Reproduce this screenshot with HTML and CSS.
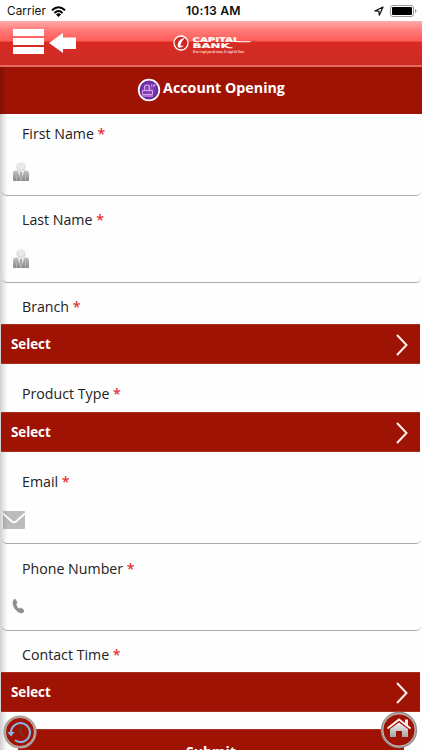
FILE: index.html
```html
<!DOCTYPE html>
<html lang="en">
<head>
<meta charset="utf-8">
<title>Account Opening</title>
<link rel="stylesheet" href="styles.css">
</head>
<body>
<svg class="defs" width="0" height="0">
  <defs>
    <linearGradient id="silver" x1="0" y1="0" x2="0" y2="1"><stop offset="0" stop-color="#f2f2f2"/><stop offset="1" stop-color="#a5a5a5"/></linearGradient>
    <linearGradient id="suit" x1="0" y1="0" x2="0" y2="1"><stop offset="0" stop-color="#c4c4c4"/><stop offset="1" stop-color="#888"/></linearGradient>
    <symbol id="person" viewBox="0 0 18 20">
      <path d="M1 10.5Q1.500 8.500 4 8.500H14Q16.500 8.500 17 10.500V18Q17 19 16 19H2Q1 19 1 18Z" fill="url(#suit)"/>
      <path d="M5.500 8H12.500L9 19Z" fill="#eee"/>
      <path d="M8 10H10L10.500 15L9 18L7.500 15Z" fill="#aaa"/>
      <path d="M4.500 14V19M13.500 14V19" stroke="#ccc" stroke-width=".5"/>
      <circle cx="9" cy="5" r="4.600" fill="#ddd"/>
      <circle cx="9" cy="4" r="3.200" fill="#e9e9e9"/>
    </symbol>
    <symbol id="chevron" viewBox="0 0 14 24"><path d="M2 2L11.500 12L2 22" fill="none" stroke="#fff0e9" stroke-width="2"/></symbol>
  </defs>
</svg>
<div class="screen">
  <div class="status">
    <span class="carrier">Carrier</span>
    <svg class="wifi" width="15" height="11" viewBox="0 0 15 11"><g fill="none" stroke="#000" stroke-width="2"><path d="M1 4.300Q7.500-1.700 14 4.300"/><path d="M3.500 6.900Q7.500 3.200 11.500 6.900"/></g><path d="M5 8.400Q7.500 6.300 10 8.400L7.500 11Z"/></svg>
    <span class="time">10:13 AM</span>
    <svg class="loc" width="10" height="10" viewBox="0 0 10 10"><path d="M.8 5L9 1L5.300 9.200L4.900 5.100Z" fill="none" stroke="#111" stroke-width="1.200" stroke-linejoin="round"/></svg>
    <svg class="battery" width="27" height="12" viewBox="0 0 27 12"><rect x=".5" y=".5" width="23" height="11" rx="2.500" fill="#fff" stroke="#999"/><rect x="2" y="2" width="20" height="8" rx="1"/><path d="M25 4Q26.500 4.500 26.500 6T25 8Z" fill="#999"/></svg>
  </div>
  <header class="bar">
    <svg class="menu" width="31" height="25" viewBox="0 0 31 25"><path d="M0 0H31V7H0ZM0 9H31V16H0ZM0 18H31V25H0Z" fill="#fff"/></svg>
    <svg class="back" width="27" height="20" viewBox="0 0 27 20"><path d="M0 10L14 0V4.500H27V16H14V20Z" fill="#fff"/></svg>
    <svg class="logo" width="80" height="20" viewBox="0 0 80 20">
      <circle cx="8" cy="9" r="7" fill="#cf2525" stroke="#fff" stroke-width="1.300"/>
      <path d="M11.800 4.300Q6.800 4.300 5 9Q3.800 13.500 6.500 13.700Q9.500 13.500 11 11.500L7.500 12Q8 7.500 11.800 4.300Z" fill="#fff"/>
      <text class="brand" x="19.500" y="8.200" textLength="47" lengthAdjust="spacingAndGlyphs">CAPITAL</text>
      <path d="M65 7.700H77.500M55 13.700H59.500" stroke="#fff" stroke-width="1.100"/>
      <text class="brand" x="19.500" y="14.200" textLength="37" lengthAdjust="spacingAndGlyphs">BANK</text>
      <text class="motto" x="20" y="18.700" textLength="51" lengthAdjust="spacingAndGlyphs">Il ne s'agit pas de nous, il s'agit de Vous</text>
    </svg>
  </header>
  <div class="title">
    <svg width="24" height="24" viewBox="0 0 24 24">
      <defs><radialGradient id="purple"><stop offset="0" stop-color="#9a50c4"/><stop offset="1" stop-color="#5f249b"/></radialGradient></defs>
      <circle cx="12" cy="12" r="10.300" fill="url(#purple)" stroke="#fff" stroke-width="1.700"/>
      <path d="M7.500 12V9.500Q7.500 7 10 7T12.500 9.500V12" fill="none" stroke="#d7a8ec" stroke-width="1.200"/>
      <path d="M5.500 12.500H15.500V16.500H5.500ZM5 18H16" fill="none" stroke="#d7a8ec"/>
      <path d="M14.500 6.500L15 8.500M17 6V8.500L18.500 6.500" fill="none" stroke="#e5bdf0"/>
    </svg>
    <h1>Account Opening</h1>
  </div>
  <main class="form">
    <section class="field first"><label>First Name <b>*</b></label><div class="input"><svg class="person" width="18" height="20"><use href="#person"/></svg></div></section>
    <section class="field last"><label>Last Name <b>*</b></label><div class="input"><svg class="person" width="18" height="20"><use href="#person"/></svg></div></section>
    <section class="field branch"><label>Branch <b>*</b></label><div class="select">Select<svg width="14" height="24"><use href="#chevron"/></svg></div></section>
    <section class="field product"><label>Product Type <b>*</b></label><div class="select">Select<svg width="14" height="24"><use href="#chevron"/></svg></div></section>
    <section class="field email"><label>Email <b>*</b></label><div class="input"><svg class="mail" width="22" height="18" viewBox="0 0 22 18"><rect width="22" height="18" rx="1" fill="#bcbcbc"/><path d="M0 2.500L9 10.500Q11 12.200 13 10.500L22 2.500" fill="none" stroke="#fff" stroke-width="1.700"/></svg></div></section>
    <section class="field phone"><label>Phone Number <b>*</b></label><div class="input"><svg class="call" width="13" height="16" viewBox="0 0 13 16"><path d="M3.200 .8L5.400 4.200Q5.600 5 4.200 6Q4.800 8.700 7.200 10.700L9 9.400L12.300 12.300Q11.800 15.500 8.800 15.200Q1.200 12.500 .6 5Q.6 1.500 3.200 .8Z" fill="#8e8e8e"/></svg></div></section>
    <section class="field contact"><label>Contact Time <b>*</b></label><div class="select">Select<svg width="14" height="24"><use href="#chevron"/></svg></div></section>
    <button class="submit">Submit</button>
  </main>
  <div class="edge"></div>
  <svg class="fab history" width="34" height="34" viewBox="0 0 34 34">
    <circle cx="17" cy="17" r="15.500" fill="#9f1304" stroke="#aaa09d" stroke-width="2.200"/>
    <circle cx="17" cy="17" r="14.500" fill="none" stroke="#d7cbc8" stroke-width=".7"/>
    <path d="M8 18A9.500 9.500 0 1 1 12 25.300" fill="none" stroke="#83b7e8" stroke-width="2"/>
    <path d="M4.300 17H11.700L8 21.500Z" fill="#83b7e8"/>
    <path d="M17.500 11V18L21 21.500" fill="none" stroke="#713a37" stroke-width="1.500"/>
  </svg>
  <svg class="fab home" width="38" height="38" viewBox="0 0 38 38">
    <circle cx="19" cy="19" r="17" fill="#9f1304" stroke="#999190" stroke-width="2.400"/>
    <circle cx="19" cy="19" r="16.200" fill="none" stroke="#ddd2cf" stroke-width=".7"/>
    <path d="M19 11.500L28 18V26H22V20H16V26H10V18Z" fill="url(#silver)"/>
    <path d="M7.500 17.500L19 8.500L30.500 17.500" fill="none" stroke="#fff" stroke-width="1.800"/>
    <path d="M25 8.500H28V15L25 12.500Z" fill="#eee"/>
  </svg>
</div>
</body>
</html>
```

FILE: styles.css
```css
* { box-sizing: border-box; }
body { margin: 0; font-family: "Open Sans", sans-serif; color: #222; }
.defs { position: absolute; }
.screen { position: relative; width: 422px; height: 750px; overflow: hidden; background: #fefefe; }
.status { height: 21px; display: grid; grid-template-columns: 44px 135px 1fr 16px 27px; align-items: center; padding: 1px 5px 0 7px; font: 12px/20px Inter, sans-serif; color: #111; background: #fff; }
.wifi { margin-left: 0; }
.carrier { font-size: 11.7px; letter-spacing: .1px; }
.time { font-size: 12.2px; font-weight: 600; letter-spacing: .2px; }
.bar { height: 46px; display: flex; align-items: flex-start; padding: 8px 0 0 13px; border-bottom: 2px solid #e8695f; background: linear-gradient(#ffaaa9 0, #ff7876 10px, #ff5c57 20px, #d92b24 21px, #cd2b25 44px) padding-box; }
.back { margin: 4px 0 0 5px; }
.logo { margin: 5px 0 0 97px; }
.brand { font: bold 6.4px "DejaVu Sans", sans-serif; fill: #fff; stroke: #fff; stroke-width: .2px; }
.motto { font: italic bold 3.5px "Liberation Serif", serif; fill: #ffe2df; }
.title { height: 47px; display: flex; justify-content: center; align-items: center; gap: 2px; padding: 0 0 5px; background: #9f1304; color: #fff; }
.title svg { position: relative; top: 2px; }
.title h1 { margin: 0; font-size: 14.25px; line-height: 20px; font-weight: 700; }
.form { display: flex; flex-direction: column; }
.field { display: flex; flex-direction: column; flex: none; padding-right: 1px; }
.field label { display: block; padding-left: 22px; font-size: 14.2px; line-height: 20px; }
.field b { color: #e23238; font-weight: 600; }
.input { flex: 1; display: flex; align-items: flex-end; margin-left: 2px; border-bottom: 1.5px solid #aaa; border-radius: 0 0 5px 5px; }
.first { height: 82px; padding-top: 10px; }
.last { height: 87px; padding-top: 14px; }
.branch { height: 81px; padding-top: 14px; }
.product { height: 88px; padding-top: 20px; }
.email { height: 92px; padding-top: 20px; }
.phone { height: 87px; padding-top: 15px; }
.contact { height: 81px; padding-top: 14px; }
.person { margin: 0 0 13px 10px; }
.mail { margin: 0 0 14px 1px; }
.call { margin: 0 0 16px 10px; }
.select { height: 40px; margin: auto 1px 0 1px; padding: 0 11px 0 10px; display: flex; align-items: center; justify-content: space-between; background: #9f1304; border: 1px solid #a93023; border-width: 1px 0; color: #fff; font-size: 13.3px; line-height: 20px; font-weight: 700; position: relative; z-index: 3; }
.select svg { margin-top: 1px; }
.submit { height: 40px; margin: 17px 18px 0; padding: 5px 0 0; border: 0; border-top: 1px solid #a93023; background: #9f1304; color: #fff; font: 700 14px/20px "Open Sans", sans-serif; }
.edge { position: absolute; left: 0; top: 67px; width: 8px; bottom: 0; background: linear-gradient(90deg, rgba(0,0,0,.18), rgba(0,0,0,.07) 55%, transparent); }
.fab { position: absolute; z-index: 4; }
.history { left: 3px; top: 715px; }
.home { left: 380px; top: 711px; }
```
